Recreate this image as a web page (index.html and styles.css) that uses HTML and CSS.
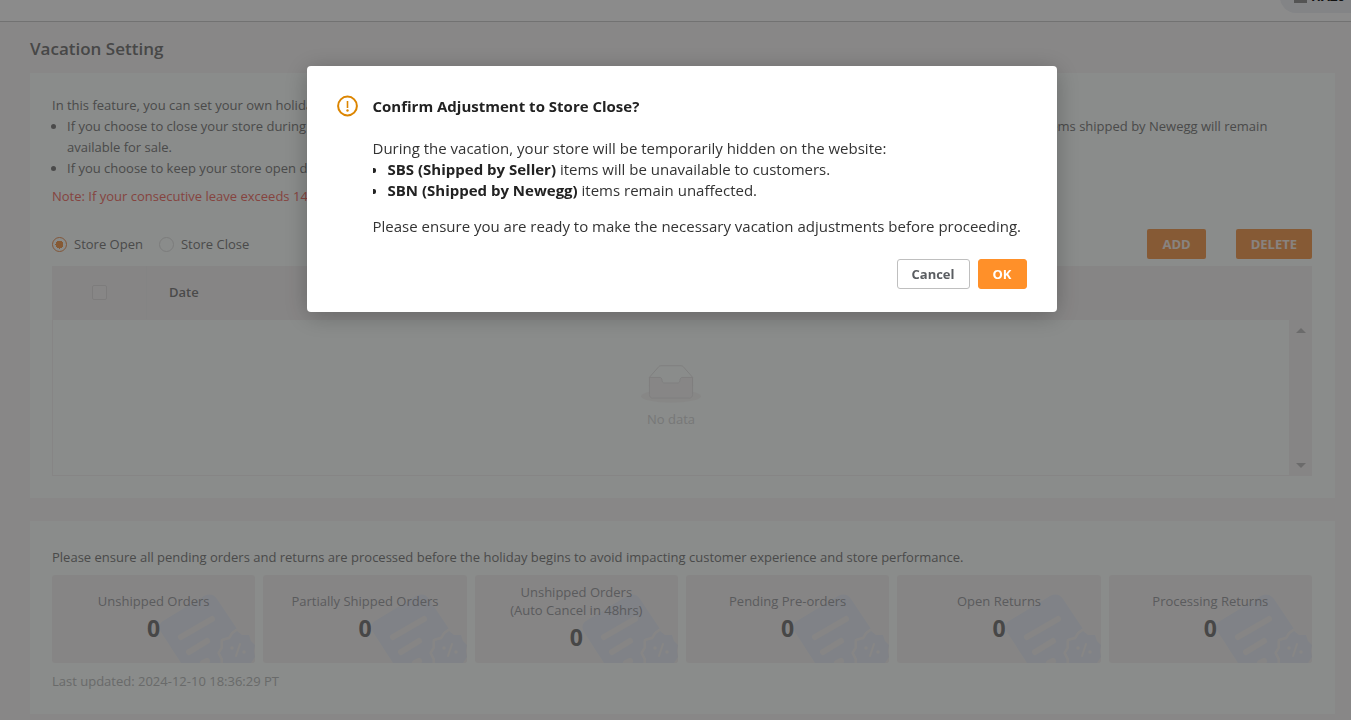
FILE: index.html
```html
<!DOCTYPE html>
<html lang="en">
<head>
<meta charset="utf-8">
<title>Vacation Setting</title>
<link rel="stylesheet" href="styles.css">
</head>
<body>
<svg class="defs" aria-hidden="true">
  <symbol id="coupon" viewBox="0 0 96 69">
    <path fill="#e9edf6" d="M4 27 45 2q8-4 13 3l20 30v34H22L2 38Q-2 31 4 27Z"/>
    <g stroke="#f4f2f2" stroke-width="6" stroke-linecap="round"><path d="M22 43 53 25M30 58 48 47M44 69l4-2"/></g>
    <path fill="#e9edf6" stroke="#f5f3f3" stroke-width="5" paint-order="stroke" stroke-linejoin="round" d="m78 37 5 4 7 0 2 6 4 4-1 6 1 6-4 6H64l0-4-3-6 3-5 0-7 7-2 3-5Z"/>
    <path stroke="#f6f4f3" stroke-width="2" stroke-linecap="round" d="m81 50-4 12"/>
    <circle cx="73" cy="54" r="1.800" fill="#f6f4f3"/><circle cx="85" cy="58" r="1.800" fill="#f6f4f3"/>
  </symbol>
</svg>
<header class="topbar">
  <button class="account" type="button"><span class="bars"></span>HAZ0</button>
</header>
<main class="page">
  <h1 class="title">Vacation Setting</h1>
  <section class="card settings">
    <p>In this feature, you can set your own holiday dates and choose whether to keep your store open.</p>
    <ul class="rules">
      <li>If you choose to close your store during the vacation, all items shipped by sellers will be temporarily hidden on the website for the period selected, while only the items shipped by Newegg will remain available for sale.</li>
      <li>If you choose to keep your store open during the vacation, all items remain available.</li>
    </ul>
    <p class="note">Note: If your consecutive leave exceeds 14 days, please contact support.</p>
    <div class="toolbar">
      <label class="choice"><input type="radio" name="store" checked>Store Open</label>
      <label class="choice"><input type="radio" name="store">Store Close</label>
      <div class="actions"><button class="action" type="button">ADD</button><button class="action" type="button">DELETE</button></div>
    </div>
    <div class="grid">
      <table class="table">
        <thead><tr><th class="pick"><input type="checkbox" aria-label="Select all"></th><th>Date</th></tr></thead>
        <tbody><tr><td colspan="2">
          <div class="empty">
          <svg width="60" height="39" viewBox="0 0 64 41"><ellipse cx="32" cy="33" rx="32" ry="7" fill="#f6f6f5"/><g fill="none" stroke="#e6e5e5"><path fill="#fbfffd" d="M55 12.800 44.900 1.300C44.400.700 43.700.500 42.900.500H21.100c-.8 0-1.500.2-2 .8L9 12.800V22h46v-9.200Z"/><path fill="#f6f5f5" d="M41.600 15.900c0-1.600 1-2.900 2.200-2.900H55v18.100c0 2.200-1.300 3.900-3 3.900H12c-1.700 0-3-1.700-3-3.900V13h11.200c1.200 0 2.200 1.300 2.200 2.900 0 1.600 1 3 2.200 3h14.800c1.200 0 2.200-1.400 2.200-3Z"/></g></svg>
          <span>No data</span></div>
        </td></tr></tbody>
      </table>
      <div class="scroll"><i class="up"></i><i class="down"></i></div>
    </div>
  </section>
  <section class="card summary">
    <p class="ensure">Please ensure all pending orders and returns are processed before the holiday begins to avoid impacting customer experience and store performance.</p>
    <div class="tiles">
      <div class="tile"><svg class="coupon"><use href="#coupon"/></svg><span>Unshipped Orders</span><strong>0</strong></div>
      <div class="tile"><svg class="coupon"><use href="#coupon"/></svg><span>Partially Shipped Orders</span><strong>0</strong></div>
      <div class="tile"><svg class="coupon"><use href="#coupon"/></svg><span>Unshipped Orders<br>(Auto Cancel in 48hrs)</span><strong>0</strong></div>
      <div class="tile"><svg class="coupon"><use href="#coupon"/></svg><span>Pending Pre-orders</span><strong>0</strong></div>
      <div class="tile"><svg class="coupon"><use href="#coupon"/></svg><span>Open Returns</span><strong>0</strong></div>
      <div class="tile"><svg class="coupon"><use href="#coupon"/></svg><span>Processing Returns</span><strong>0</strong></div>
    </div>
    <p class="updated">Last updated: 2024-12-10 18:36:29 PT</p>
  </section>
</main>
<div class="mask">
  <div class="modal" role="dialog" aria-modal="true" aria-labelledby="dlg">
    <svg class="warn" width="21" height="22" viewBox="0 0 21 22"><circle cx="10.500" cy="11" r="9.400" fill="none" stroke="#dc8500" stroke-width="2"/><path stroke="#dc8500" stroke-width="1.600" d="M10.500 6v7"/><circle cx="10.500" cy="15.500" r="1.200" fill="#dc8500"/></svg>
    <div class="content">
      <h2 id="dlg">Confirm Adjustment to Store Close?</h2>
      <p>During the vacation, your store will be temporarily hidden on the website:</p>
      <ul class="effects"><li><b>SBS (Shipped by Seller)</b> items will be unavailable to customers.</li><li><b>SBN (Shipped by Newegg)</b> items remain unaffected.</li></ul>
      <p class="last">Please ensure you are ready to make the necessary vacation adjustments before proceeding.</p>
      <div class="buttons"><button class="btn" type="button">Cancel</button><button class="btn primary" type="button">OK</button></div>
    </div>
  </div>
</div>
</body>
</html>
```
FILE: styles.css
```css
* { box-sizing: border-box; }
body { margin: 0; height: 100vh; overflow: hidden; background: #f8f6f6; color: #888; font: 13px/21px "Open Sans", sans-serif; }
h1, h2, p, ul { margin: 0; padding: 0; }
button { font: inherit; cursor: pointer; }
.defs { position: absolute; width: 0; height: 0; }
.topbar { height: 22px; border-bottom: 1px solid #d0d0d0; background: #fdfdfd; display: flex; justify-content: flex-end; align-items: flex-end; padding-bottom: 8px; overflow: hidden; }
.account { flex: none; width: 71px; height: 32px; border: 0; border-radius: 16px 0 0 16px; background: #eef0f5; color: #222; font-weight: 700; line-height: 16px; display: flex; align-items: center; gap: 4px; padding: 0 0 2px 14px; }
.bars { width: 13px; height: 13px; border-top: 3px solid #999; border-bottom: 3px solid #999; }
.page { padding: 16px 16px 0 30px; }
.title { font-size: 17px; font-weight: 600; line-height: 22px; color: #828282; margin-bottom: 13px; }
.card { background: #fbfffd; padding: 22px 23px 22px 22px; }
.settings { margin-bottom: 23px; }
.rules { padding-left: 15px; }
.note { color: #f37c74; margin: 7px 0 18px; }
.toolbar { display: flex; align-items: center; gap: 16px; height: 38px; margin-bottom: 3px; }
.choice { display: flex; align-items: center; gap: 7px; }
.choice input { appearance: none; width: 15px; height: 15px; margin: 0; border: 1px solid #e2e2e2; border-radius: 50%; }
.choice input:checked { border-color: #ed9d66; background: radial-gradient(circle, #f5a562 4px, transparent 4px); }
.actions { margin-left: auto; display: flex; gap: 30px; }
.action { height: 30px; padding: 0 15px; border: 0; border-radius: 2px; background: #f5a562; color: #f8efe8; font-weight: 700; }
.grid { display: flex; background: #f5f3f3; }
.table { flex: 1; border-collapse: separate; border-spacing: 0; }
.table th { height: 53px; padding: 0 0 0 22px; text-align: left; font-weight: 600; background: #f5f3f3; }
.table .pick { width: 95px; padding: 0; text-align: center; border-right: 1px solid #f1f0f0; }
.pick input { appearance: none; display: block; width: 15px; height: 15px; margin: 0 auto; border: 1px solid #e4e2e2; border-radius: 2px; background: #f6f5f5; }
.table td { height: 157px; padding: 0; background: #fbfffd; border: 1px solid #f5f3f3; }
.empty { display: flex; flex-direction: column; align-items: center; gap: 5px; color: #d9dada; }
.scroll { width: 22px; padding: 62px 0 8px; display: flex; flex-direction: column; justify-content: space-between; align-items: center; }
.up, .down { border: 5px solid transparent; border-top-width: 0; border-bottom-color: #c4c4c4; }
.down { border-width: 5px 5px 0; border-top-color: #c4c4c4; }
.summary { padding-top: 26px; }
.ensure { margin-bottom: 7px; }
.tiles { display: grid; grid-template-columns: repeat(6, 1fr); gap: 8px; margin-bottom: 8px; }
.tile { position: relative; overflow: hidden; height: 88px; border-radius: 3px; background: #f5f3f3; display: flex; flex-direction: column; align-items: center; justify-content: center; text-align: center; color: #a5a6aa; line-height: 18px; }
.tile span, .tile strong { position: relative; }
.tile strong { color: #828282; font-size: 23px; line-height: 36px; }
.coupon { position: absolute; right: 0; bottom: 0; width: 96px; height: 69px; }
.updated { color: #c0c2c1; }
.mask { position: fixed; inset: 0; padding-left: 12px; background: rgba(0, 0, 0, .45); }
.modal { width: 750px; max-width: 90%; margin: 66px auto 0; display: flex; gap: 15px; padding: 29px 30px 23px; border-radius: 4px; background: #fff; color: #333; font-size: 15px; line-height: 21px; box-shadow: 0 4px 24px rgba(0, 0, 0, .25); }
.warn { flex: none; }
.content { flex: 1; }
.content h2 { font-size: 15px; line-height: 22px; color: #222; margin-bottom: 21px; }
.effects { padding-left: 15px; list-style: none; }
.effects li::before { content: ""; float: left; width: 3px; height: 5px; margin: 9px 0 0 -15px; border-radius: 0 2px 2px 0; background: #222; }
.effects b { color: #222; }
.last { margin: 15px 0 22px; }
.buttons { display: flex; justify-content: flex-end; gap: 8px; }
.btn { height: 30px; padding: 0 14px; border: 1px solid #bfbfbf; border-radius: 3px; background: #fff; color: #5a5d61; font-size: 13px; font-weight: 700; }
.primary { border-color: #ff9029; background: #ff9029; color: #fff; }
```
